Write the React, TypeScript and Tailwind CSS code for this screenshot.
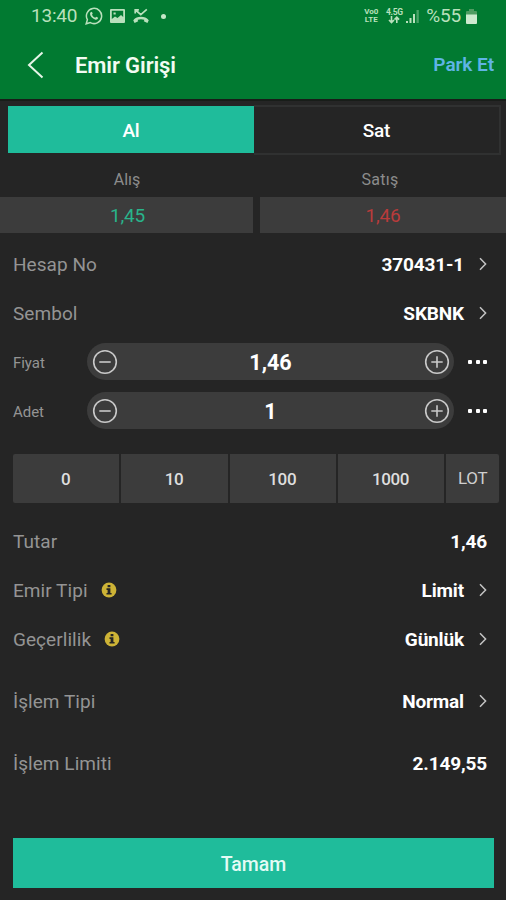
import React from "react";

function Chevron() {
  return (
    <svg className="ml-[14px] mr-[18px] h-3.5 w-2.5 shrink-0" viewBox="0 0 10 14" fill="none" stroke="#c4c4c4" strokeWidth="1.5">
      <path d="M2 1.2 7.6 7 2 12.8" />
    </svg>
  );
}

function Info() {
  return (
    <svg className="ml-[13px] h-4 w-4" viewBox="0 0 16 16">
      <circle cx="8" cy="8" r="7.4" fill="#cdb336" />
      <path d="M6.6 3h2.8v2.2H6.6zM5.5 6.3h3.9v4.6h1.2v1.6H5.5v-1.6h1.1V7.9H5.5z" fill="#252525" />
    </svg>
  );
}

type RowProps = { label: string; value: string; info?: boolean; arrow?: boolean; className?: string };

function Row({ label, value, info, arrow, className = "h-[49px]" }: RowProps) {
  return (
    <div className={`flex items-center pl-[13px] ${className}`}>
      <span className="pt-[3px] text-[19px] tracking-[0.05px] text-[#949494]">{label}</span>
      {info && <Info />}
      <span className={`ml-auto pt-[3px] text-[19px] font-bold tracking-[-0.15px] text-white ${arrow ? "" : "mr-[19px]"}`}>{value}</span>
      {arrow && <Chevron />}
    </div>
  );
}

function RoundButton({ plus }: { plus?: boolean }) {
  return (
    <svg className="h-[26px] w-[26px]" viewBox="0 0 26 26" fill="none" stroke="#c9c9c9" strokeWidth="1.6">
      <circle cx="13" cy="13" r="11.3" />
      <path d={plus ? "M7.3 13h11.4M13 7.3v11.4" : "M7.3 13h11.4"} />
    </svg>
  );
}

function Stepper({ label, value }: { label: string; value: string }) {
  return (
    <div className="flex h-[49px] items-center pl-[13px]">
      <span className="w-[74px] pt-[3px] text-[15px] tracking-[-0.05px] text-[#949494]">{label}</span>
      <div className="flex h-[37px] w-[367px] items-center justify-between rounded-full bg-[#3c3c3c] pl-[5px] pr-[4px]">
        <RoundButton />
        <span className="pr-px pt-[3px] text-[21.5px] font-bold text-white">{value}</span>
        <RoundButton plus />
      </div>
      <div className="ml-[14px] flex gap-[3.5px]">
        <i className="h-1 w-1 rounded-[1px] bg-white" />
        <i className="h-1 w-1 rounded-[1px] bg-white" />
        <i className="h-1 w-1 rounded-[1px] bg-white" />
      </div>
    </div>
  );
}

function StatusBar() {
  return (
    <div className="flex h-8 items-center pl-[31px] pr-[29px] text-[#b9e0bc]">
      <span className="text-[19px] tracking-[-0.2px]">13:40</span>
      <svg className="ml-[8px] h-[18px] w-[18px]" viewBox="0 0 18 18" fill="none" stroke="currentColor" strokeWidth="1.5">
        <path d="M1.2 16.8 2.4 12.7A7.6 7.6 0 1 1 5.3 15.6Z" />
        <path d="M5.6 5.2c.6-.8 1.2-.7 1.5 0l.6 1.4-.7 1.1c.8 1.6 1.8 2.5 3.2 3.1l1-1 2 1c-.3 1.7-1.8 2.2-3.2 1.7C7.4 11.6 5.2 9.4 5 7.1c0-.7.2-1.4.6-1.9Z" fill="currentColor" stroke="none" />
      </svg>
      <svg className="ml-[7px] h-4 w-[15px]" viewBox="0 0 15 16">
        <path fillRule="evenodd" fill="currentColor" d="M1 1h13q1 0 1 1v12q0 1-1 1H1q-1 0-1-1V2Q0 1 1 1ZM1.800 2.800v8.200l3.200-2.500 2.500 1.500L11 7l2.200 2V2.800ZM3.500 4.400h2.200v2H3.500Z" />
      </svg>
      <svg className="ml-2 h-4 w-4" viewBox="0 0 16 16" fill="none" stroke="currentColor" strokeWidth="1.7">
        <path d="M2.2 5.500V1.800h3.700M2.500 2l5.300 4.600L13.800 1.300" />
        <path d="M1.500 12.800c1.600-2 3.700-2.800 6.500-2.800s4.900.8 6.500 2.800" strokeWidth="2.600" />
        <path d="m.9 13.600 3.700-1.700M15.100 13.600l-3.700-1.700" strokeWidth="3.200" />
      </svg>
      <i className="ml-[12px] h-[5px] w-[5px] rounded-full bg-[#c4e8c8]" />
      <div className="ml-auto w-4 text-center text-[8px] font-bold leading-[8px]">
        Vo0
        <br />
        LTE
      </div>
      <div className="ml-[7px] flex w-4 flex-col items-center text-[8.5px] font-bold leading-[8px]">
        <span className="tracking-[-0.4px]">4.5G</span>
        <svg className="h-2 w-3" viewBox="0 0 12 8" fill="none" stroke="currentColor" strokeWidth="1.6">
          <path d="M3.500 0v6M1 4l2.500 2.500L6 4M8.800 7V1.200M6.500 3.600l2.300-2.400 2.300 2.400" />
        </svg>
      </div>
      <svg className="ml-[3px] h-[15px] w-[15px]" viewBox="0 0 15 15" fill="currentColor">
        <path d="M1 12h2v2H1zM4.500 9h2v5h-2zM8 5h2v9H8z" />
        <path d="M11.500 1h2.300v13h-2.300z" opacity=".4" />
      </svg>
      <span className="ml-[6px] text-[19px] tracking-[-0.2px]">%55</span>
      <svg className="ml-[5px] h-[15px] w-[11px]" viewBox="0 0 11 15">
        <path d="M3 0h5v2h2q1 0 1 1v3H0V3q0-1 1-1h2Z" fill="#4f9c62" />
        <path d="M0 5.500h11v8.500q0 1-1 1H1q-1 0-1-1Z" fill="#cdeacf" />
      </svg>
    </div>
  );
}

export default function App() {
  return (
    <div className="flex h-[900px] w-[506px] flex-col overflow-hidden whitespace-nowrap bg-[#252525] font-[Roboto,sans-serif]">
      <header className="h-[99px] shrink-0 bg-[#017a31]">
        <StatusBar />
        <div className="flex h-[66px] items-center pl-[27px] pr-[12px]">
          <svg className="h-[28px] w-[17px]" viewBox="0 0 17 28" fill="none" stroke="#e6f5e8" strokeWidth="2">
            <path d="M15.500 1.500 2 14l13.500 12.500" />
          </svg>
          <h1 className="ml-[31px] text-[22px] font-semibold tracking-[-0.1px] text-[#f2fbf2]">Emir Girişi</h1>
          <span className="ml-auto pt-px text-[19px] font-semibold tracking-[-0.05px] text-[#5fb4e5]">Park Et</span>
        </div>
      </header>
      <div className="h-[7px] shrink-0 border-t-2 border-[#181d19]" />
      <div className="flex h-[49px] shrink-0 pl-2 pr-[5px] text-[19px] font-medium tracking-[-0.2px] text-white">
        <div className="flex h-[47px] w-[246px] items-center justify-center bg-[#1fbc9b] pt-[3px]">Al</div>
        <div className="-mt-px flex h-[50px] flex-1 items-center justify-center border-2 border-l-0 border-[#303131] pt-[2px]">Sat</div>
      </div>
      <div className="flex h-[42px] shrink-0 items-center pt-[8px] text-center text-base text-[#8c8c8c]">
        <span className="w-[254px]">Alış</span>
        <span className="flex-1 tracking-[0.3px]">Satış</span>
      </div>
      <div className="flex h-9 shrink-0 gap-[7px] text-[19px]">
        <div className="flex w-[253px] items-center justify-center bg-[#3c3c3c] pl-[2px] pt-[2px] tracking-[-0.2px] text-[#29b48b]">1,45</div>
        <div className="flex flex-1 items-center justify-center bg-[#3c3c3c] pt-[2px] tracking-[-0.2px] text-[#b93b3b]">1,46</div>
      </div>
      <div className="mt-[6px]">
        <Row label="Hesap No" value="370431-1" arrow />
        <Row label="Sembol" value="SKBNK" arrow />
        <Stepper label="Fiyat" value="1,46" />
        <Stepper label="Adet" value="1" />
      </div>
      <div className="ml-[13px] mr-[7px] mt-[19px] flex h-[49px] shrink-0 gap-[2px] overflow-hidden rounded-[2px] text-[17px] font-medium text-[#dedede]">
        {["0", "10", "100", "1000"].map((n) => (
          <div key={n} className="flex w-[106.3px] items-center justify-center bg-[#3c3c3c] pr-px pt-[3px] tracking-[-0.35px]">{n}</div>
        ))}
        <div className="flex flex-1 items-center justify-center bg-[#3c3c3c] pt-px font-normal tracking-[-0.3px] text-[#cfcfcf]">LOT</div>
      </div>
      <div className="mt-[13px]">
        <Row label="Tutar" value="1,46" />
        <Row label="Emir Tipi" value="Limit" info arrow />
        <Row label="Geçerlilik" value="Günlük" info arrow />
        <Row label="İşlem Tipi" value="Normal" arrow className="h-[75px]" />
        <Row label="İşlem Limiti" value="2.149,55" className="h-[49px]" />
      </div>
      <button className="ml-[13px] mr-[12px] mt-[51px] flex h-[50px] shrink-0 items-center justify-center bg-[#1fbc9b] pt-[3px] text-[19.5px] font-medium text-[#e4fbf5]">
        Tamam
      </button>
    </div>
  );
}
